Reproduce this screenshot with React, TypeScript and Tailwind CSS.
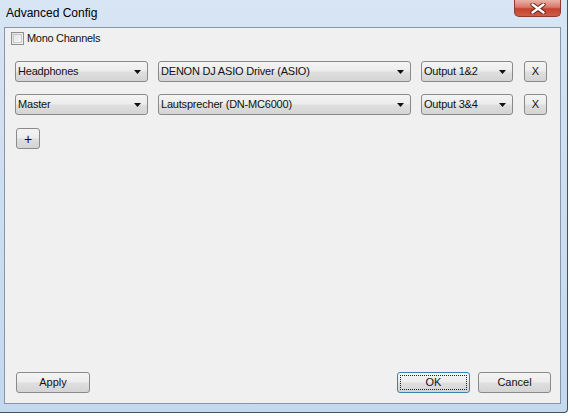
const font = { fontFamily: '"Liberation Sans", Arial, sans-serif' }

const face =
  'bg-[linear-gradient(to_bottom,#f4f4f4_0%,#ececec_48%,#dfdfdf_52%,#d4d4d4_100%)]'

function Arrow() {
  return (
    <svg width="8" height="4" viewBox="0 0 8 4" className="shrink-0">
      <path d="M0 0 H7 L3.5 4 Z" fill="#111" />
    </svg>
  )
}

function Select({ label, width }: { label: string; width: string }) {
  return (
    <div
      className={`${width} h-[21px] shrink-0 flex items-center pl-[2px] pr-[5px] border border-[#8a8a8a] rounded-[3px] ${face}`}
    >
      <span className="flex-1 truncate text-[11px] tracking-[-0.2px] text-[#111] leading-none">{label}</span>
      <Arrow />
    </div>
  )
}

function Button({ label, width, focused, big }: { label: string; width: string; focused?: boolean; big?: boolean }) {
  return (
    <div
      className={`${width} h-[21px] shrink-0 rounded-[3px] border ${
        focused ? 'border-[#3c7fb1] p-[2px]' : 'border-[#8a8a8a]'
      } ${face} flex`}
    >
      <div
        className={`flex-1 flex items-center justify-center ${big ? 'text-[14px]' : 'text-[11px]'} leading-none text-[#111] ${
          focused ? 'border border-dotted border-[#222]' : ''
        }`}
      >
        {label}
      </div>
    </div>
  )
}

function Row({ src, device, out }: { src: string; device: string; out: string }) {
  return (
    <div className="flex items-center h-[21px]">
      <Select label={src} width="w-[133px]" />
      <div className="w-[10px]" />
      <Select label={device} width="w-[253px]" />
      <div className="w-[10px]" />
      <Select label={out} width="w-[92px]" />
      <div className="w-[11px]" />
      <Button label="X" width="w-[23px]" />
    </div>
  )
}

export default function App() {
  return (
    <div className="w-[570px] h-[416px] bg-white" style={font}>
      <div className="w-[568px] h-[413px] flex flex-col border-r border-b border-[#44525f] rounded-br-[4px] bg-[linear-gradient(to_bottom,#d7e5f4_0%,#cfdff1_40%,#c4d8ee_100%)]">
        {/* title bar */}
        <div className="h-[27px] flex items-start shrink-0">
          <span className="pl-[6px] pt-[7px] text-[12px] text-black leading-none">
            Advanced Config
          </span>
          <div className="ml-auto mr-[6px] w-[47px] h-[17px] rounded-b-[5px] border border-t-0 border-[#8e3b2d] bg-[linear-gradient(to_bottom,#eab3a7_0%,#d8786a_45%,#c4432f_55%,#cf5c47_100%)] flex items-center justify-center">
            <svg width="16" height="11" viewBox="0 0 16 11">
              <path d="M2.5 1.5 L13.5 9.5 M13.5 1.5 L2.5 9.5" stroke="#5a2018" strokeWidth="4.2" strokeLinecap="round" />
              <path d="M2.5 1.5 L13.5 9.5 M13.5 1.5 L2.5 9.5" stroke="#fff" strokeWidth="2.4" strokeLinecap="round" />
            </svg>
          </div>
        </div>

        {/* client area */}
        <div className="ml-[4px] mr-[6px] mb-[8px] flex-1 flex flex-col border border-[#8696a8] bg-[#f0f0f0]">
          <div className="mt-[4px] ml-[6px] flex items-center gap-[3px] h-[13px]">
            <div className="w-[13px] h-[13px] border border-[#8e8f8f] bg-[linear-gradient(to_bottom_right,#dcdcdc,#fbfbfb)] p-[1px]">
              <div className="w-full h-full border border-[#c8c8c8] bg-[linear-gradient(to_bottom_right,#e4e4e4,#f6f6f6)]" />
            </div>
            <span className="text-[11px] tracking-[-0.3px] leading-none text-[#111]">Mono Channels</span>
          </div>

          <div className="mt-[16px] ml-[10px] flex flex-col gap-[12px]">
            <Row src="Headphones" device="DENON DJ ASIO Driver (ASIO)" out="Output 1&2" />
            <Row src="Master" device="Lautsprecher (DN-MC6000)" out="Output 3&4" />
          </div>

          <div className="mt-[13px] ml-[11px]">
            <Button label="+" width="w-[24px]" big />
          </div>

          <div className="flex-1" />

          <div className="mb-[10px] ml-[11px] mr-[9px] flex items-center">
            <Button label="Apply" width="w-[74px]" />
            <div className="flex-1" />
            <Button label="OK" width="w-[73px]" focused />
            <div className="w-[8px]" />
            <Button label="Cancel" width="w-[73px]" />
          </div>
        </div>
      </div>
    </div>
  )
}
